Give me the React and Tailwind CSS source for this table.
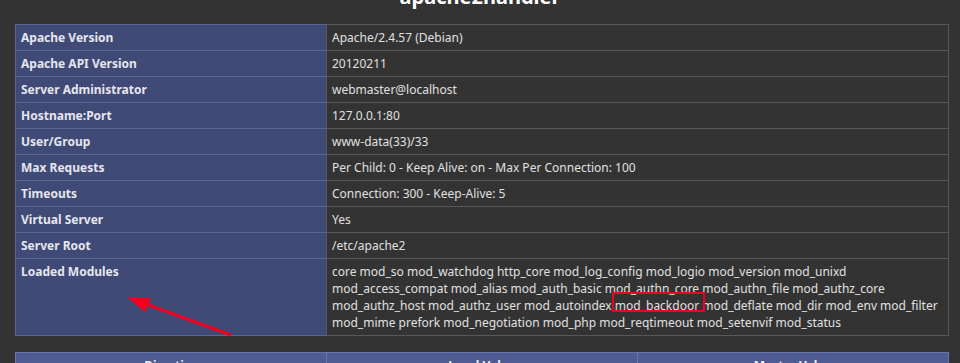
import React from "react";

const rows = [
  ["Apache Version", "Apache/2.4.57 (Debian)"],
  ["Apache API Version", "20120211"],
  ["Server Administrator", "webmaster@localhost"],
  ["Hostname:Port", "127.0.0.1:80"],
  ["User/Group", "www-data(33)/33"],
  ["Max Requests", "Per Child: 0 - Keep Alive: on - Max Per Connection: 100"],
  ["Timeouts", "Connection: 300 - Keep-Alive: 5"],
  ["Virtual Server", "Yes"],
  ["Server Root", "/etc/apache2"],
];

function Row({ label, first, children }) {
  return (
    <div className="flex">
      <div
        className={
          first
            ? "w-[311px] shrink-0 border-l border-b border-t border-[#5b6592] bg-[#3f4a76] px-[5px] py-[4px] font-bold text-[#e6e6ee]"
            : "w-[311px] shrink-0 border-l border-b border-[#5b6592] bg-[#3f4a76] px-[5px] py-[4px] font-bold text-[#e6e6ee]"
        }
      >
        {label}
      </div>
      <div
        className={
          first
            ? "w-[623px] shrink-0 border-x border-b border-t border-[#585858] px-[5px] py-[4px]"
            : "w-[623px] shrink-0 border-x border-b border-[#585858] px-[5px] py-[4px]"
        }
      >
        {children}
      </div>
    </div>
  );
}

export default function App() {
  return (
    <div className="relative h-[363px] w-[960px] overflow-hidden bg-[#333333] font-['Noto_Sans',sans-serif] text-[12px] leading-[17px] text-[#e0e0e0]">
      <h2 className="-mt-[15px] h-[24px] text-center text-[20px] font-bold leading-[24px] text-white">
        apache2handler
      </h2>
      <div className="ml-[15px] mt-[15px] w-[934px]">
        {rows.map(([l, v], i) => (
          <Row key={l} label={l} first={i === 0}>
            {v}
          </Row>
        ))}
        <Row label="Loaded Modules">
          <span className="block whitespace-nowrap">
            core mod_so mod_watchdog http_core mod_log_config mod_logio mod_version mod_unixd
          </span>
          <span className="block whitespace-nowrap">
            mod_access_compat mod_alias mod_auth_basic mod_authn_core mod_authn_file mod_authz_core
          </span>
          <span className="block whitespace-nowrap">
            mod_authz_host mod_authz_user mod_autoindex{" "}
            <span className="relative">
              mod_backdoor
              <span className="absolute -left-[3px] -top-[5px] h-[20px] w-[93px] border-2 border-[#f0001e]"></span>
            </span>{" "}
            mod_deflate mod_dir mod_env mod_filter
          </span>
          <span className="block whitespace-nowrap">
            mod_mime prefork mod_negotiation mod_php mod_reqtimeout mod_setenvif mod_status
          </span>
        </Row>
      </div>
      <div className="ml-[15px] mt-4 flex w-[934px] border border-[#6a76aa] bg-[#4f5b93] font-bold text-[#f0f0f0]">
        <div className="w-[310px] shrink-0 px-[5px] py-[4px] text-center">Directive</div>
        <div className="w-[311px] shrink-0 border-l border-[#6a76aa] px-[5px] py-[4px] text-center">Local Value</div>
        <div className="flex-1 border-l border-[#6a76aa] px-[5px] py-[4px] text-center">Master Value</div>
      </div>
      <svg
        className="pointer-events-none absolute left-0 top-0"
        width="960"
        height="363"
        viewBox="0 0 960 363"
      >
        <line x1="231" y1="335" x2="143" y2="303" stroke="#f0001e" strokeWidth="3" />
        <polygon points="127,297 151,298 145,312" fill="#f0001e" />
      </svg>
    </div>
  );
}
